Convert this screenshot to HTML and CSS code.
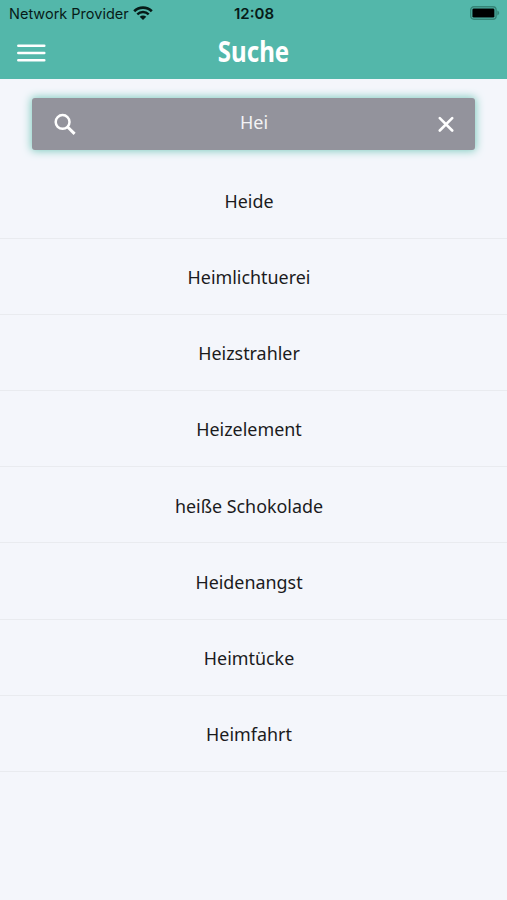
FILE: index.html
```
<!DOCTYPE html>
<html lang="de">
<head>
    <meta charset="UTF-8">
    <meta name="viewport" content="width=device-width, initial-scale=1.0">
    <title>Suche</title>
    <link rel="stylesheet" href="styles.css">
</head>
<body>

<header class="header">
    <div class="status-bar">
        <div class="carrier">
            <span>Network Provider</span>
            <svg class="wifi" width="20" height="14" viewBox="0 0 20 14" fill="none" stroke="#071b18">
                <path d="M1.2 5.2C6.2 0.3 13.8 0.3 18.8 5.2" stroke-width="2.7"/>
                <path d="M4.3 8.3C7.5 5.3 12.5 5.3 15.7 8.3" stroke-width="2.5"/>
                <path d="M10 14L6.7 10.7C8.5 9.1 11.5 9.1 13.3 10.7Z" fill="#071b18" stroke="none"/>
            </svg>
        </div>
        <span class="time">12:08</span>
        <svg class="battery" width="30" height="14" viewBox="0 0 30 14">
            <rect x="0.7" y="0.7" width="25.4" height="12.6" rx="3.2" fill="none" stroke="#358577" stroke-width="1.4"/>
            <rect x="2.4" y="2.4" width="22" height="9.2" rx="1.4" fill="#000"/>
            <path d="M27.3 4.6C29.8 5.4 29.8 8.6 27.3 9.4Z" fill="#358577"/>
        </svg>
    </div>
    <div class="nav-bar">
        <button type="button" class="menu" aria-label="Menü">
            <svg width="29" height="20" viewBox="0 0 29 20" stroke="#fff" stroke-width="2.5" stroke-linecap="round">
                <path d="M1.3 2.7H27.3M1.3 9.9H27.3M1.3 17.2H27.3"/>
            </svg>
        </button>
        <h1>Suche</h1>
    </div>
</header>

<div class="search">
    <svg width="22" height="22" viewBox="0 0 22 22" fill="none" stroke="#fff" stroke-width="2.5">
        <circle cx="8.6" cy="8.9" r="6.9"/>
        <path d="M13.4 13.7L20.6 20.9" stroke-width="2.9"/>
    </svg>
    <span class="search-text">Hei</span>
    <svg width="16" height="16" viewBox="0 0 16 16" fill="none" stroke="#fff" stroke-width="2.6" stroke-linecap="round">
        <path d="M1.8 2.1L14.2 14.5M14.2 2.1L1.8 14.5"/>
    </svg>
</div>

<ul class="results">
    <li>Heide</li>
    <li>Heimlichtuerei</li>
    <li>Heizstrahler</li>
    <li>Heizelement</li>
    <li>heiße Schokolade</li>
    <li>Heidenangst</li>
    <li>Heimtücke</li>
    <li>Heimfahrt</li>
</ul>

</body>
</html>
```
FILE: styles.css
```
* {
    box-sizing: border-box;
}
body {
    margin: 0;
    min-height: 900px;
    background-color: #f4f6fb;
    font-family: "Noto Sans", sans-serif;
    color: #1b1b1d;
}
.header {
    height: 79px;
    background-color: #53b7aa;
}
.status-bar {
    display: grid;
    grid-template-columns: 1fr auto 1fr;
    align-items: center;
    height: 27px;
    padding: 0 7px 0 9px;
    font-family: Inter, sans-serif;
    font-size: 14.5px;
    color: #071b18;
}
.carrier {
    display: flex;
    align-items: center;
    gap: 4px;
    white-space: nowrap;
}
.wifi {
    margin-bottom: 2px;
}
.time {
    margin-right: 1px;
    font-weight: 600;
    font-size: 15px;
}
.battery {
    justify-self: end;
    margin-bottom: 1px;
}
.nav-bar {
    display: grid;
    grid-template-columns: 60px 1fr 60px;
    align-items: center;
    height: 52px;
}
.menu {
    margin-left: 17px;
    padding: 0;
    border: none;
    background: none;
    text-align: left;
}
.menu svg {
    display: block;
}
h1 {
    margin: 0;
    padding-bottom: 4px;
    font-size: 29px;
    line-height: 48px;
    font-weight: 700;
    text-align: center;
    color: #fff;
    transform: scaleX(0.83);
}
.search {
    display: flex;
    align-items: center;
    justify-content: space-between;
    height: 52px;
    margin: 19px 32px 12.4px;
    padding: 0 21px 0 22px;
    border-radius: 3px;
    background-color: #93939c;
    box-shadow: 0 0 9px 1px #7fcbbf;
}
.search-text {
    padding: 0 6px 5px 0;
    font-size: 18px;
    line-height: 24px;
    color: #f3f3f5;
}
.results {
    margin: 0;
    padding: 0;
    list-style: none;
}
.results li {
    display: flex;
    align-items: center;
    justify-content: center;
    height: 76.2px;
    padding: 1.6px 9px 0 0;
    border-bottom: 1px solid #e9ebef;
    font-size: 17.9px;
}
```
